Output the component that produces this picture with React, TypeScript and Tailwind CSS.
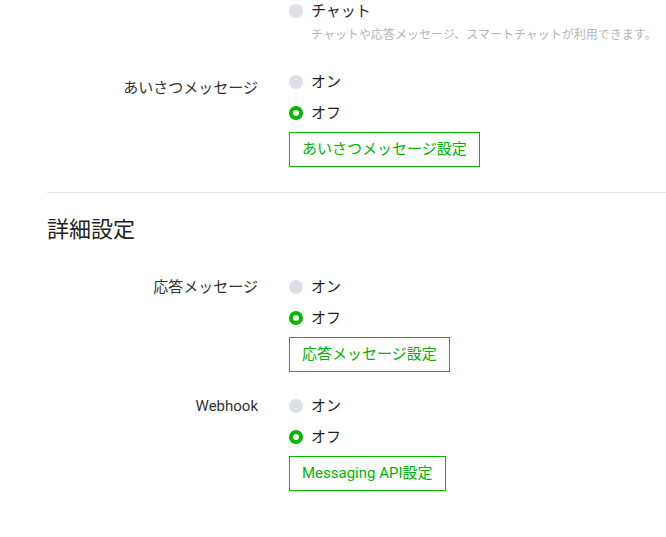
import { JSX } from "react";

type Opt = { label: string; on: boolean };

function Radio({ label, on }: Opt): JSX.Element {
  return (
    <div className="flex h-[22px] items-center gap-2">
      {on ? (
        <span className="h-[14px] w-[14px] rounded-full border-[4px] border-[#00b900] bg-white" />
      ) : (
        <span className="h-[14px] w-[14px] rounded-full bg-[#dde0e5]" />
      )}
      <span className="text-[15px] text-[#1e1e1e]">{label}</span>
    </div>
  );
}

function Setting({
  label,
  button,
  labelOffset = "",
}: {
  label: string;
  button: string;
  labelOffset?: string;
}): JSX.Element {
  return (
    <div className="flex">
      <div
        className={`w-[211px] shrink-0 text-right text-[15px] leading-[22px] text-[#333] ${labelOffset}`}
      >
        {label}
      </div>
      <div className="ml-[31px] flex flex-col">
        <Radio label="オン" on={false} />
        <div className="mt-[9px]">
          <Radio label="オフ" on />
        </div>
        <button className="mt-[8px] h-[35px] self-start border border-[#00b900] bg-white px-[12px] text-[15px] text-[#00b300]">
          {button}
        </button>
      </div>
    </div>
  );
}

export default function App(): JSX.Element {
  return (
    <div
      className="min-h-[537px] w-full bg-white pl-[47px]"
      style={{ fontFamily: '"Roboto", "Noto Sans CJK JP", sans-serif' }}
    >
      <div className="ml-[242px]">
        <Radio label="チャット" on={false} />
        <p className="ml-[22px] mt-[5px] text-[12px] leading-[16px] text-[#b5b5b5]">
          チャットや応答メッセージ、スマートチャットが利用できます。
        </p>
      </div>

      <div className="mt-[28px]">
        <Setting label="あいさつメッセージ" button="あいさつメッセージ設定" labelOffset="mt-[6px]" />
      </div>

      <div className="mt-[25px] border-t border-[#e5e5e5]" />

      <h2 className="mt-[22px] text-[22px] leading-[30px] text-[#222]">詳細設定</h2>

      <div className="mt-[31px] flex flex-col gap-[23px]">
        <Setting label="応答メッセージ" button="応答メッセージ設定" />
        <Setting label="Webhook" button="Messaging API設定" />
      </div>
    </div>
  );
}
